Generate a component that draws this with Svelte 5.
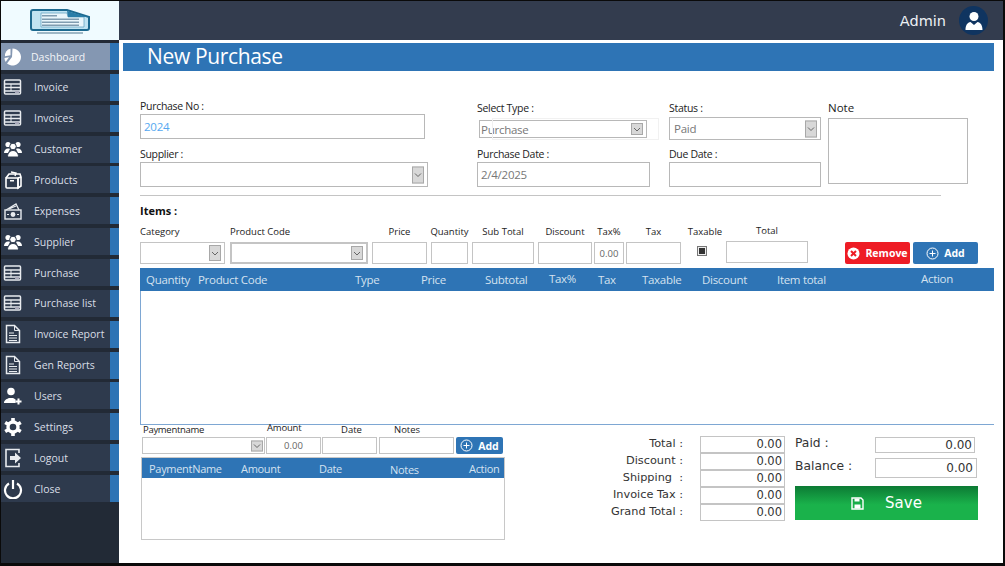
<script>
  const menu = [
    { label: 'Dashboard', icon: 'pie', active: true },
    { label: 'Invoice', icon: 'table' },
    { label: 'Invoices', icon: 'table' },
    { label: 'Customer', icon: 'people' },
    { label: 'Products', icon: 'box' },
    { label: 'Expenses', icon: 'money' },
    { label: 'Supplier', icon: 'people' },
    { label: 'Purchase', icon: 'table' },
    { label: 'Purchase list', icon: 'table' },
    { label: 'Invoice Report', icon: 'doc' },
    { label: 'Gen Reports', icon: 'doc' },
    { label: 'Users', icon: 'useradd' },
    { label: 'Settings', icon: 'gear' },
    { label: 'Logout', icon: 'logout' },
    { label: 'Close', icon: 'power' }
  ];
  const itemCols = ['Quantity', 'Product Code', 'Type', 'Price', 'Subtotal', 'Tax%', 'Tax', 'Taxable', 'Discount', 'Item total', 'Action'];
  const payCols = ['PaymentName', 'Amount', 'Date', 'Notes', 'Action'];
  const totals = ['Total :', 'Discount :', 'Shipping  :', 'Invoice Tax :', 'Grand Total :'];
</script>

{#snippet arrow()}
  <span class="arrow"><svg width="8" height="5" viewBox="0 0 8 5"><path d="M1 1l3 3 3-3" fill="none" stroke="#666" stroke-width="1"/></svg></span>
{/snippet}

{#snippet plus()}
  <svg class="btn-ic" width="13" height="13" viewBox="0 0 13 13"><circle cx="6.5" cy="6.5" r="5.5" fill="none" stroke="#fff"/><path d="M6.5 3.5v6M3.5 6.5h6" stroke="#fff"/></svg>
{/snippet}

{#snippet icon(name)}
  <svg class="ic" width="20" height="20" viewBox="0 0 20 20">
    {#if name === 'pie'}
      <path d="M9.500 1.500a8.500 8.500 0 1 1-5.500 15l5-6.500z" fill="#fff"/><path d="M7.500 1.800v6.400L2 9.300A6.500 6.500 0 0 1 7.500 1.800z" fill="#fff"/><path d="M1.500 11l4.500-.8-3.300 4.800a7 7 0 0 1-1.200-4z" fill="#fff"/>
    {:else if name === 'table'}
      <rect x="1.500" y="3" width="16" height="14" rx="1" fill="none" stroke="#e8ebef" stroke-width="1.500"/>
      <path d="M2 7h15M2 10.500h15M2 14h15" stroke="#e8ebef" stroke-width="1.500"/><path d="M8 7v7" stroke="#e8ebef"/><rect x="12" y="14" width="4" height="2" fill="#aab"/>
    {:else if name === 'people'}
      <circle cx="5" cy="5.500" r="2.600" fill="#fff"/><circle cx="15" cy="5.500" r="2.600" fill="#fff"/><path d="M1 14c0-3 2-4.500 4-4.500s2 .5 2 .5l-2 4z" fill="#fff"/><path d="M19 14c0-3-2-4.500-4-4.500s-2 .5-2 .5l2 4z" fill="#fff"/>
      <circle cx="10" cy="7.500" r="3.300" stroke="#2e3a4d" fill="#fff"/><path d="M4.500 18c0-4 2.500-6.500 5.500-6.500s5.500 2.500 5.500 6.500z" stroke="#2e3a4d" fill="#fff"/>
    {:else if name === 'box'}
      <path d="M3 8h12v10H4a1 1 0 0 1-1-1z" fill="none" stroke="#fff" stroke-width="1.600"/><path d="M3 8l3-4h11l1 3-3 1M15 8v10l3-2V7" fill="none" stroke="#fff" stroke-width="1.600"/><path d="M8 2l5 1-1 3" fill="none" stroke="#fff" stroke-width="1.400"/><rect x="7" y="10" width="4" height="1.500" fill="#fff"/>
    {:else if name === 'money'}
      <rect x="2" y="9" width="16" height="9" fill="none" stroke="#e8ebef" stroke-width="1.400"/><circle cx="10" cy="13.500" r="2.400" fill="#e8ebef"/><path d="M3 9l10-6 3 6M6 8l7-3" fill="none" stroke="#e8ebef" stroke-width="1.300"/><path d="M4 13.500h2M14 13.500h2" stroke="#e8ebef"/>
    {:else if name === 'doc'}
      <path d="M3.500 1.500h8l5 5v12h-13z" fill="none" stroke="#e8ebef" stroke-width="1.500"/><path d="M11.500 1.500v5h5" fill="none" stroke="#e8ebef"/><path d="M6 9h5M6 11.500h8M6 14h8M6 16.500h8" stroke="#e8ebef" stroke-width="1.200"/>
    {:else if name === 'useradd'}
      <circle cx="8" cy="5.500" r="3.800" fill="#fff"/><path d="M1 17c0-3.500 3.500-4 5-5h4c1 .6 2 1 2.600 1.600V17z" fill="#fff"/><path d="M15.500 12.500v6M12.500 15.500h6" stroke="#fff" stroke-width="2"/>
    {:else if name === 'gear'}
      <circle cx="10" cy="10" r="5" fill="none" stroke="#fff" stroke-width="3.400"/>
      <path d="M10 1v3.500M10 15.500V19M2.200 5.500l3 1.700M14.800 12.800l3 1.700M2.200 14.500l3-1.700M14.800 7.200l3-1.700" stroke="#fff" stroke-width="3.600"/>
    {:else if name === 'logout'}
      <path d="M16 5V1.500H3v17h13V15" fill="none" stroke="#e8ebef" stroke-width="1.600"/><path d="M7 8h5V4.500l6 5.500-6 5.500V12H7z" fill="#e8ebef"/>
    {:else if name === 'power'}
      <path d="M6 4.500a8 8 0 1 0 8 0" fill="none" stroke="#fff" stroke-width="2.200"/><path d="M10 1v9" stroke="#fff" stroke-width="2.200"/>
    {/if}
  </svg>
{/snippet}

<div class="app">
  <aside class="side">
    <div class="logo">
      <svg width="62" height="28" viewBox="0 0 62 28">
        <path d="M4 2h34l22 7v11a2 2 0 0 1-2 2H4a2 2 0 0 1-2-2V4a2 2 0 0 1 2-2z" fill="#bfe3f2" stroke="#1d6a90" stroke-width="2"/>
        <path d="M12 5h26l1 4h16v10H12z" fill="#eaf6fb" stroke="#6ba7c4" stroke-width=".8"/>
        <path d="M38 3l1 6h20z" fill="#2a7ea8"/>
        <path d="M13 7h15v1.500H13zM13 10.500h37v1.600H13zM13 13.500h37v1.600H13zM13 16.500h37v1.600H13z" fill="#7f9cb0"/>
        <rect x="8" y="24" width="46" height="2" fill="#9fb8c6"/>
      </svg>
    </div>
    <nav class="menu">
      {#each menu as m}
        <div class="item" class:active={m.active}>
          <span class="item-ic">{@render icon(m.icon)}</span>
          <span class="item-label">{m.label}</span>
        </div>
      {/each}
    </nav>
  </aside>

  <div class="content">
    <header class="top">
      <span class="admin">Admin</span>
      <span class="avatar">
        <svg width="20" height="20" viewBox="0 0 20 20"><circle cx="10" cy="5.500" r="4.500" fill="#fff"/><path d="M1.500 19c0-5 2-7.500 5-8l3.500 3 3.500-3c3 .5 5 3 5 8z" fill="#fff"/></svg>
      </span>
    </header>

    <main class="page">
      <h1 class="title">New Purchase</h1>

      <section class="form-top">
        <div class="col col-a">
          <div class="lab">Purchase No :</div>
          <div class="field no">2024</div>
          <div class="lab supplier-lab">Supplier :</div>
          <div class="field select supplier">{@render arrow()}</div>
        </div>
        <div class="col col-b">
          <div class="lab">Select Type :</div>
          <div class="field select type">Purchase{@render arrow()}</div>
          <div class="lab lower">Purchase Date :</div>
          <div class="field date">2/4/2025</div>
        </div>
        <div class="col col-c">
          <div class="lab">Status :</div>
          <div class="field select status">Paid{@render arrow()}</div>
          <div class="lab lower2">Due Date :</div>
          <div class="field date"></div>
        </div>
        <div class="col col-d">
          <div class="note-lab">Note</div>
          <div class="field note"></div>
        </div>
      </section>

      <hr class="rule" />
      <div class="items-lab">Items :</div>

      <section class="items-row">
        <div class="cell left w85"><span class="c-lab">Category</span><div class="f select">{@render arrow()}</div></div>
        <div class="cell left w138"><span class="c-lab">Product Code</span><div class="f select double">{@render arrow()}</div></div>
        <div class="cell w55"><span class="c-lab">Price</span><div class="f"></div></div>
        <div class="cell w37"><span class="c-lab">Quantity</span><div class="f"></div></div>
        <div class="cell w62"><span class="c-lab">Sub Total</span><div class="f"></div></div>
        <div class="cell w54"><span class="c-lab">Discount</span><div class="f"></div></div>
        <div class="cell w30"><span class="c-lab">Tax%</span><div class="f val">0.00</div></div>
        <div class="cell w55"><span class="c-lab">Tax</span><div class="f"></div></div>
        <div class="cell w40"><span class="c-lab">Taxable</span><span class="check"><i></i></span></div>
        <div class="cell w82 total"><span class="c-lab">Total</span><div class="f"></div></div>
        <button class="btn remove">
          <svg class="btn-ic" width="13" height="13" viewBox="0 0 13 13"><circle cx="6.500" cy="6.500" r="6" fill="#fff"/><path d="M4 4l5 5M9 4l-5 5" stroke="#ee1c25" stroke-width="2"/></svg>
          Remove
        </button>
        <button class="btn add">{@render plus()} Add</button>
      </section>

      <section class="grid">
        <div class="grid-head">
          {#each itemCols as c}<span class:up={c === 'Tax%' || c === 'Action'}>{c}</span>{/each}
        </div>
        <div class="grid-body"></div>
      </section>

      <section class="bottom">
        <div class="pay">
          <div class="pay-labels">
            <span class="l1">Paymentname</span><span class="l2">Amount</span><span class="l3">Date</span><span class="l4">Notes</span>
          </div>
          <div class="pay-fields">
            <div class="f select p1">{@render arrow()}</div>
            <div class="f val p2">0.00</div>
            <div class="f p3"></div>
            <div class="f p4"></div>
            <button class="btn add p5">{@render plus()} Add</button>
          </div>
          <div class="pay-table">
            <div class="pay-head">
              {#each payCols as c}<span class:down={c === 'Notes'}>{c}</span>{/each}
            </div>
          </div>
        </div>

        <div class="totals">
          {#each totals as t}
            <div class="t-row"><span class="t-lab">{t}</span><span class="t-val">0.00</span></div>
          {/each}
        </div>

        <div class="summary">
          <div class="s-row paid"><span>Paid :</span><b>0.00</b></div>
          <div class="s-row bal"><span>Balance :</span><b>0.00</b></div>
          <button class="save">
            <svg width="13" height="13" viewBox="0 0 13 13"><path d="M1 1h9l2 2v9H1z" fill="none" stroke="#fff" stroke-width="1.400"/><path d="M3.500 1.500h5v3h-5z" fill="#fff"/><path d="M3.500 7.500h6v4h-6z" fill="#fff"/></svg>
            <span>Save</span>
          </button>
        </div>
      </section>
    </main>
  </div>
</div>

<style>
  :global(body) { margin: 0; background: #000; }
  * { box-sizing: border-box; }
  .app {
    width: 1005px; height: 566px; background: #0a0a0a; padding: 1px 2px 3px 1px;
    display: grid; grid-template-columns: 118px 1fr; overflow: hidden;
    font-family: "Open Sans", "Noto Sans", sans-serif; color: #222;
  }
  .side { background: #222a36; display: flex; flex-direction: column; }
  .logo { height: 39px; background: #f0fbff; display: flex; align-items: center; justify-content: center; padding: 3px 0 0 0; }
  .menu { margin-top: 3px; display: flex; flex-direction: column; gap: 3.86px; }
  .item {
    height: 27px; background: #2e3a4d; border-right: 9px solid #2e74b5; display: flex; align-items: center;
    color: #d9dee6; font-size: 10.500px; padding-left: 2px;
  }
  .item-ic { width: 31px; display: flex; }
  .ic { display: block; }
  .item.active { background: #8497b2; color: #f2f4f7; }
  .item.active .item-label { margin-left: -3px; }
  .content { display: flex; flex-direction: column; min-width: 0; }
  .top { height: 39px; background: #333c4e; display: flex; align-items: center; justify-content: flex-end; gap: 13px; padding: 0 15px 0 0; }
  .admin { font-family: "DejaVu Sans", sans-serif; font-size: 14.500px; color: #eef1f5; }
  .avatar { width: 29px; height: 29px; border-radius: 50%; background: #0f3460; display: flex; align-items: center; justify-content: center; }
  .page { flex: 1; background: #fff; padding-top: 3px; position: relative; }
  .title {
    margin: 0 9px 0 4px; height: 28px; line-height: 27px; background: #2e74b5; color: #fff;
    font-family: "Open Sans", sans-serif; font-weight: 400; font-size: 21px; letter-spacing: -.35px; padding-left: 24px;
  }
  .form-top { display: grid; grid-template-columns: 337px 192px 159px 140px; margin-left: 21px; height: 116px; }
  .col { display: flex; flex-direction: column; align-items: flex-start; }
  .col-a { padding-top: 29px; }
  .col-b, .col-c { padding-top: 31px; }
  .col-d { padding-top: 29px; }
  .lab { font-size: 10.500px; letter-spacing: -.3px; height: 13px; line-height: 13px; color: #222; white-space: nowrap; }
  .field { border: 1px solid #b8b8b8; background: #fff; font-size: 11.500px; letter-spacing: -.25px; color: #777; display: flex; align-items: center; padding-left: 3px; position: relative; height: 25px; }
  .no { width: 285px; margin-top: 1px; color: #55a8f0; }
  .supplier-lab { margin-top: 9px; }
  .supplier { width: 288px; margin-top: 1px; }
  .type { width: 168px; height: 18px; margin: 5px 0 0 2px; padding-left: 1px; }
  .type::after { content: ""; position: absolute; left: 12px; right: -13px; top: -3px; bottom: -3px; border: 1px solid #f1f1f1; pointer-events: none; }
  .lower { margin-top: 10px; }
  .lower2 { margin-top: 8px; }
  .date { width: 100%; margin-top: 1px; }
  .col-b .date { width: 173px; }
  .col-c .date { width: 152px; }
  .status { width: 152px; height: 23px; margin-top: 2px; padding-left: 4px; }
  .note-lab { font-size: 11.500px; height: 15px; line-height: 15px; }
  .note { width: 140px; height: 66px; margin-top: 3px; }
  .arrow { position: absolute; right: 3px; top: 50%; transform: translateY(-50%); width: 12px; height: calc(100% - 4px); max-height: 17px; background: #d8d8d8; border: 1px solid #a8a8a8; display: flex; align-items: center; justify-content: center; }
  .rule { margin: 8px 0 0 21px; width: 801px; border: 0; height: 1px; background: #c4c4c4; }
  .items-lab { margin: 8px 0 0 21px; height: 14px; line-height: 14px; font-size: 11px; font-weight: 700; color: #111; }
  .items-row { display: flex; margin: 6px 0 0 21px; height: 44px; align-items: flex-start; gap: 4px; }
  .cell { display: flex; flex-direction: column; align-items: center; font-size: 9.500px; }
  .cell.left { align-items: flex-start; }
  .c-lab { height: 18px; line-height: 16px; white-space: nowrap; color: #222; }
  .w85 { width: 85px; margin-right: 1px; }
  .w138 { width: 138px; }
  .w55 { width: 55px; }
  .w37 { width: 37px; }
  .w62 { width: 62px; }
  .w54 { width: 54px; margin-right: -2px; }
  .w30 { width: 30px; margin-right: -2px; }
  .w40 { width: 40px; margin-right: -3px; }
  .w82 { width: 82px; margin-right: 33px; }
  .total { margin-top: -1px; }
  .f { width: 100%; height: 22px; border: 1px solid #c4c4c4; background: #fff; position: relative; display: flex; align-items: center; justify-content: center; font-size: 9.500px; color: #666; }
  .double { border: 2px solid #c4c4c4; box-shadow: inset 0 0 0 1px #fff; }
  .check { width: 10px; height: 10px; border: 1px solid #777; background: #eee; margin: 4px 6px 0 0; display: flex; align-items: center; justify-content: center; }
  .check i { display: block; width: 6px; height: 6px; background: #333; }
  .btn { border: 0; border-radius: 2px; color: #fff; font: 700 10.500px "Open Sans", sans-serif; display: flex; align-items: center; justify-content: center; gap: 5px; height: 22px; width: 65px; padding: 0; margin-top: 18px; }
  .remove { background: #ee1c25; margin-right: -1px; }
  .add { background: #2e74b5; }
  .btn-ic { flex: none; }
  .grid { margin-left: 21px; margin-right: 9px; }
  .grid-head { background: #2e74b5; height: 23px; display: grid; grid-template-columns: 52px 157px 66px 64px 64px 49px 44px 60px 75px 144px 1fr; padding-left: 6px; align-items: center; font-size: 11.500px; letter-spacing: -.3px; color: #d4e2f0; }
  .grid-head span { white-space: nowrap; }
  .up { position: relative; top: -1px; }
  .grid-body { height: 134px; border-left: 1px solid #7ea7d3; border-bottom: 1px solid #7ea7d3; }
  .bottom { display: flex; margin-left: 22px; align-items: flex-start; }
  .pay { width: 364px; }
  .pay-labels { display: flex; height: 12px; font-size: 9.500px; line-height: 10px; }
  .pay-labels span { display: block; white-space: nowrap; }
  .l1 { margin-left: 2px; width: 124px; letter-spacing: -.3px; }
  .l2 { width: 74px; margin-top: -2px; letter-spacing: -.2px; }
  .l3 { width: 53px; }
  .pay-fields { display: flex; margin-left: 1px; align-items: center; gap: 1px; }
  .p1 { width: 123px; height: 17px; }
  .p1 .arrow { right: 1px; }
  .p2 { width: 55px; height: 17px; }
  .p3 { width: 55px; height: 17px; }
  .p4 { width: 75px; height: 17px; margin-left: 1px; }
  .p5 { width: 47px; height: 17px; margin: 0 0 0 1px; }
  .pay-table { margin-top: 3px; height: 83px; border: 1px solid #c8c8c8; }
  .pay-head { background: #2e74b5; height: 20px; display: grid; grid-template-columns: 92px 78px 71px 79px 1fr; padding-left: 7px; align-items: center; font-size: 11px; letter-spacing: -.3px; color: #d4e2f0; white-space: nowrap; }
  .down { position: relative; top: 1px; }
  .totals { margin: 11px 0 0 95px; width: 185px; display: flex; flex-direction: column; font-family: "DejaVu Sans", sans-serif; }
  .t-row { display: grid; grid-template-columns: 83px 85px; column-gap: 17px; height: 17px; align-items: center; }
  .t-lab { font-size: 11.300px; text-align: right; white-space: pre; color: #333; position: relative; top: -1px; }
  .t-val { font-size: 11.500px; height: 17px; border: 1px solid #c4c4c4; text-align: right; padding-right: 2px; line-height: 15px; color: #333; }
  .summary { width: 183px; margin: 12px 0 0 10px; font-family: "DejaVu Sans", sans-serif; color: #333; }
  .s-row { display: flex; align-items: center; justify-content: space-between; }
  .s-row span { font-size: 12.300px; position: relative; top: -2px; }
  .s-row b { font-weight: 400; border: 1px solid #c4c4c4; text-align: right; font-size: 12px; padding-right: 2px; }
  .paid b { width: 100px; height: 16px; line-height: 14px; margin-right: 3px; }
  .bal { margin-top: 5px; }
  .bal b { width: 102px; height: 20px; line-height: 18px; margin-right: 1px; padding-right: 3px; }
  .save { margin-top: 8px; width: 183px; height: 34px; border: 0; background: linear-gradient(#0c7a34, #1ab24b 55%); color: #fff; font: 400 15px "DejaVu Sans", sans-serif; display: flex; align-items: center; justify-content: center; gap: 21px; padding: 0; }
</style>
